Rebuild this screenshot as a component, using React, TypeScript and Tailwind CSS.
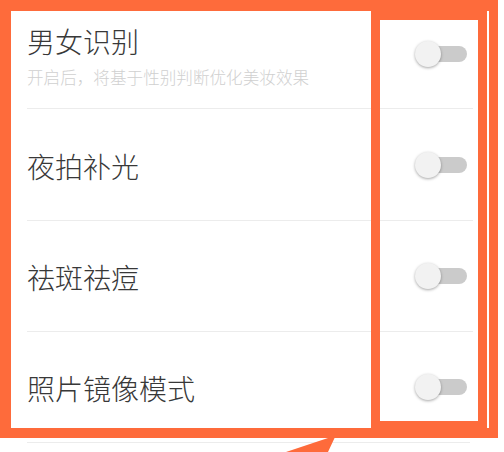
import React from "react";

const Toggle: React.FC = () => (
  <div className="relative w-[52px] h-[26px] shrink-0">
    <div className="absolute right-0 top-[5px] h-[16px] w-[44px] rounded-full bg-[#cbcbcb]" />
    <div className="absolute left-0 top-0 size-[26px] rounded-full bg-[#f2f2f2] shadow-[0_1px_3px_rgba(0,0,0,0.35)]" />
  </div>
);

const Divider: React.FC<{ w?: string }> = ({ w = "w-[446px]" }) => (
  <div className={`ml-[27px] h-px bg-[#ececec] ${w}`} />
);

const App: React.FC = () => {
  const rows = [
    { title: "夜拍补光", h: "h-[111px]" },
    { title: "祛斑祛痘", h: "h-[110px]" },
    { title: "照片镜像模式", h: "h-[110px]" },
  ];
  return (
    <div
      className="relative w-[504px] h-[452px] overflow-hidden bg-white"
      style={{ fontFamily: '"Noto Sans CJK SC", "Noto Sans", sans-serif' }}
    >
      <div className="flex flex-col">
        <div className="flex h-[108px] pl-[27px] pr-[37px]">
          <div className="flex flex-1 flex-col pt-[25px]">
            <span className="text-[28px] leading-[33px] font-light text-[#383838]">男女识别</span>
            <span className="mt-[9px] text-[16.6px] leading-[21px] font-light text-[#d0d0d0]">
              开启后，将基于性别判断优化美妆效果
            </span>
          </div>
          <div className="flex items-center">
            <Toggle />
          </div>
        </div>
        <Divider />
        {rows.map((r, i) => (
          <React.Fragment key={r.title}>
            <div className={`flex items-center pl-[27px] pr-[37px] ${r.h}`}>
              <span className="flex-1 pt-[3px] text-[28px] leading-[33px] font-light text-[#383838]">
                {r.title}
              </span>
              <Toggle />
            </div>
            <Divider w={i === rows.length - 1 ? "w-[443px]" : "w-[446px]"} />
          </React.Fragment>
        ))}
      </div>

      {/* annotation frames */}
      <div className="pointer-events-none absolute inset-0">
        <div className="absolute left-0 top-0 w-[498px] h-[438px] border-[#fe6b3b] border-t-[11px] border-l-[11px] border-b-[10px] border-r-[9px]" />
        <div className="absolute left-[371px] top-[11px] w-[116px] h-[419px] border-[9px] border-[#fe6b3b]" />
        <svg className="absolute left-0 top-0" width="504" height="452" viewBox="0 0 504 452">
          <polygon points="331,437 335,437 328,452 286,452" fill="#fe6b3b" />
        </svg>
      </div>
    </div>
  );
};

export default App;
